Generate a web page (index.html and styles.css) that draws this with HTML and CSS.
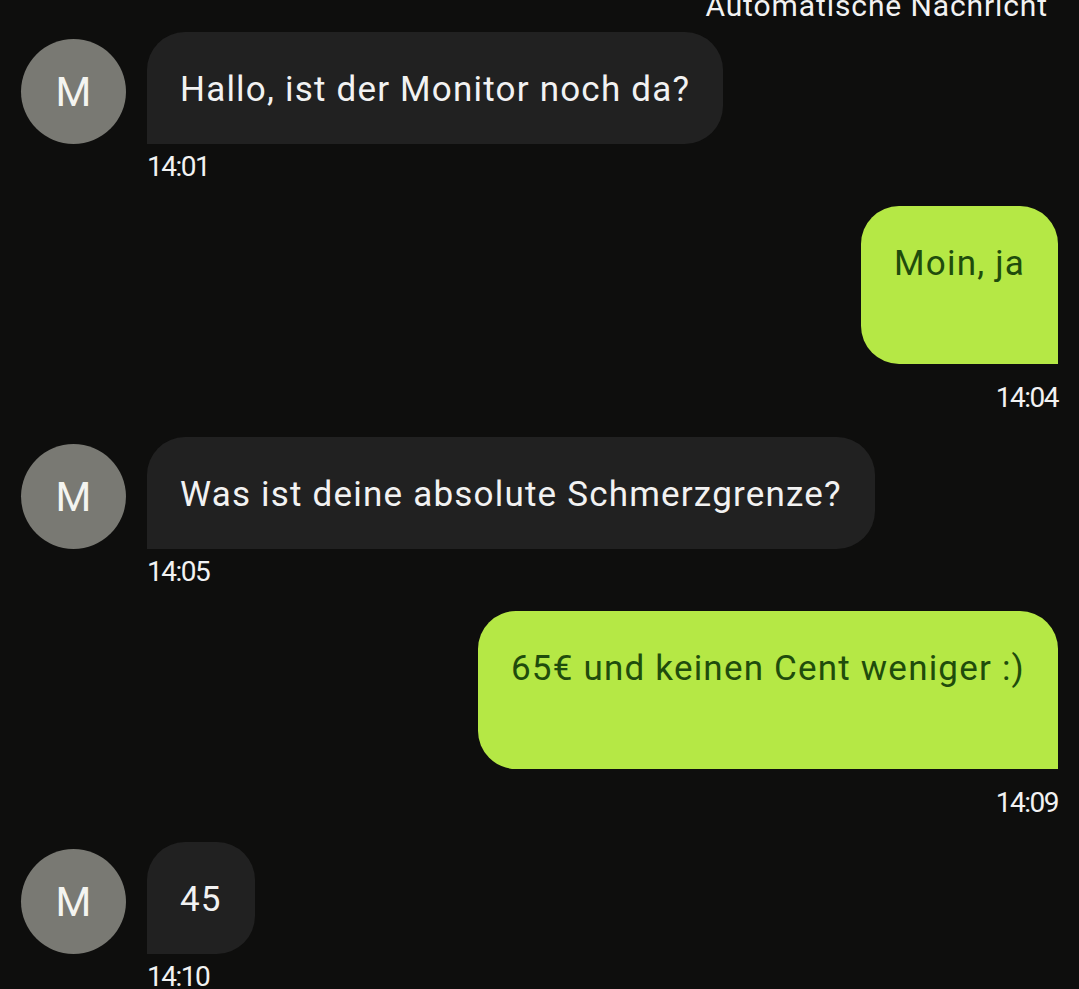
FILE: index.html
```html
<!DOCTYPE html>
<html lang="de">
<head>
  <meta charset="UTF-8">
  <meta name="viewport" content="width=device-width, initial-scale=1.0">
  <title>Chat</title>
  <link rel="stylesheet" href="styles.css">
</head>
<body>
  <div class="chat">
    <div class="notice">Automatische Nachricht</div>

    <div class="msg in">
      <div class="row">
        <div class="avatar">M</div>
        <div class="bubble">Hallo, ist der Monitor noch da?</div>
      </div>
      <div class="time">14:01</div>
    </div>

    <div class="msg out">
      <div class="bubble">Moin, ja</div>
      <div class="time">14:04</div>
    </div>

    <div class="msg in">
      <div class="row">
        <div class="avatar">M</div>
        <div class="bubble">Was ist deine absolute Schmerzgrenze?</div>
      </div>
      <div class="time">14:05</div>
    </div>

    <div class="msg out">
      <div class="bubble">65€ und keinen Cent weniger :)</div>
      <div class="time">14:09</div>
    </div>

    <div class="msg in">
      <div class="row">
        <div class="avatar">M</div>
        <div class="bubble">45</div>
      </div>
      <div class="time">14:10</div>
    </div>
  </div>
</body>
</html>
```

FILE: styles.css
```css
body {
  margin: 0;
  padding: 0;
  background-color: #0e0e0d;
  font-family: 'Roboto', sans-serif;
  color: #f2f2f2;
  height: 989px;
  overflow: hidden;
}

.chat {
  display: flex;
  flex-direction: column;
  gap: 23px;
  padding: 0 21px;
}

.notice {
  text-align: right;
  font-size: 30px;
  line-height: 32px;
  letter-spacing: 0.9px;
  margin-top: -10px;
  margin-bottom: -13px;
  padding-right: 10px;
}

.msg {
  display: flex;
  flex-direction: column;
}

.row {
  display: flex;
  align-items: flex-end;
  gap: 21px;
}

.avatar {
  width: 105px;
  height: 105px;
  border-radius: 50%;
  background-color: #797973;
  color: #f4f4f0;
  font-size: 41px;
  display: flex;
  justify-content: center;
  align-items: center;
  flex-shrink: 0;
}

.bubble {
  font-size: 35px;
  line-height: 44px;
  letter-spacing: 1.2px;
  padding: 36px 33px 32px;
  border-radius: 38px;
}

.in .bubble {
  background-color: #212121;
  border-bottom-left-radius: 0;
}

.in .time {
  margin-top: 7px;
  margin-left: 126px;
}

.out {
  align-items: flex-end;
}

.out .bubble {
  background-color: #b5e845;
  color: #1f4c0c;
  padding-bottom: 78px;
  border-bottom-right-radius: 0;
}

.out .time {
  margin-top: 18px;
}

.time {
  font-size: 28px;
  line-height: 32px;
  letter-spacing: -1.5px;
}
```
